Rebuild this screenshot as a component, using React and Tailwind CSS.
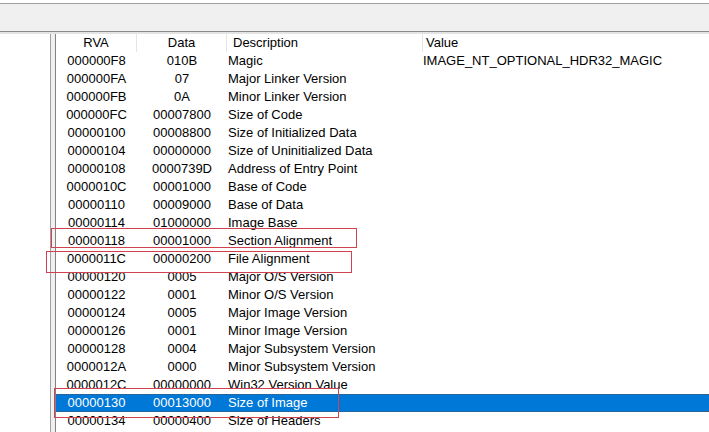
import React from "react";

const rows = [
  ["000000F8", "010B", "Magic", "IMAGE_NT_OPTIONAL_HDR32_MAGIC"],
  ["000000FA", "07", "Major Linker Version", ""],
  ["000000FB", "0A", "Minor Linker Version", ""],
  ["000000FC", "00007800", "Size of Code", ""],
  ["00000100", "00008800", "Size of Initialized Data", ""],
  ["00000104", "00000000", "Size of Uninitialized Data", ""],
  ["00000108", "0000739D", "Address of Entry Point", ""],
  ["0000010C", "00001000", "Base of Code", ""],
  ["00000110", "00009000", "Base of Data", ""],
  ["00000114", "01000000", "Image Base", ""],
  ["00000118", "00001000", "Section Alignment", ""],
  ["0000011C", "00000200", "File Alignment", ""],
  ["00000120", "0005", "Major O/S Version", ""],
  ["00000122", "0001", "Minor O/S Version", ""],
  ["00000124", "0005", "Major Image Version", ""],
  ["00000126", "0001", "Minor Image Version", ""],
  ["00000128", "0004", "Major Subsystem Version", ""],
  ["0000012A", "0000", "Minor Subsystem Version", ""],
  ["0000012C", "00000000", "Win32 Version Value", ""],
  ["00000130", "00013000", "Size of Image", ""],
  ["00000134", "00000400", "Size of Headers", ""],
];

const SELECTED = 19;

export default function App() {
  return (
    <div
      className="relative w-[709px] h-[432px] overflow-hidden bg-[#f0f0f0] text-[13px] text-black"
      style={{ fontFamily: '"Liberation Sans", Arial, sans-serif' }}
    >
      {/* toolbar strip */}
      <div className="h-[3px] bg-white" />
      <div className="h-[29px] bg-[#f0f0f0] border-t border-[#a0a0a0] border-b border-b-[#8a8a8a]" />
      <div className="h-[2px] bg-[#e4e4e4]" />

      <div className="flex h-[398px]">
        {/* tree panel */}
        <div className="w-[51px] bg-white border-r border-[#a0a0a0]" />
        <div className="w-[4px]" />

        {/* list view */}
        <div className="flex-1 bg-white border-l border-[#828282]">
          <div className="flex h-[18px] items-center leading-[18px]">
            <div className="w-[81px] text-center border-r border-[#e5e5e5]">RVA</div>
            <div className="w-[90px] text-center border-r border-[#e5e5e5]">Data</div>
            <div className="w-[196px] pl-[6px] border-r border-[#e5e5e5]">Description</div>
            <div className="flex-1 pl-[3px]">Value</div>
          </div>

          {rows.map((r, i) => {
            const sel = i === SELECTED;
            return (
              <div
                key={r[0]}
                className={
                  sel
                    ? "flex h-[18px] items-center leading-[16px] bg-[#0078d7] text-white border-y border-dotted border-[#4a5563]"
                    : "flex h-[18px] items-center leading-[18px]"
                }
              >
                <div className="w-[81px] text-center">{r[0]}</div>
                <div className="w-[90px] text-center">{r[1]}</div>
                <div className="w-[196px] pl-px whitespace-nowrap">{r[2]}</div>
                <div className="flex-1 whitespace-nowrap">{r[3]}</div>
              </div>
            );
          })}
        </div>
      </div>

      {/* red annotation boxes */}
      <div className="absolute left-[51px] top-[228px] w-[306px] h-[20px] border border-[#d0424f]" />
      <div className="absolute left-[46px] top-[251px] w-[306px] h-[22px] border border-[#d0424f]" />
      <div className="absolute left-[54px] top-[388px] w-[285px] h-[30px] border border-[#d0424f]" />
    </div>
  );
}
